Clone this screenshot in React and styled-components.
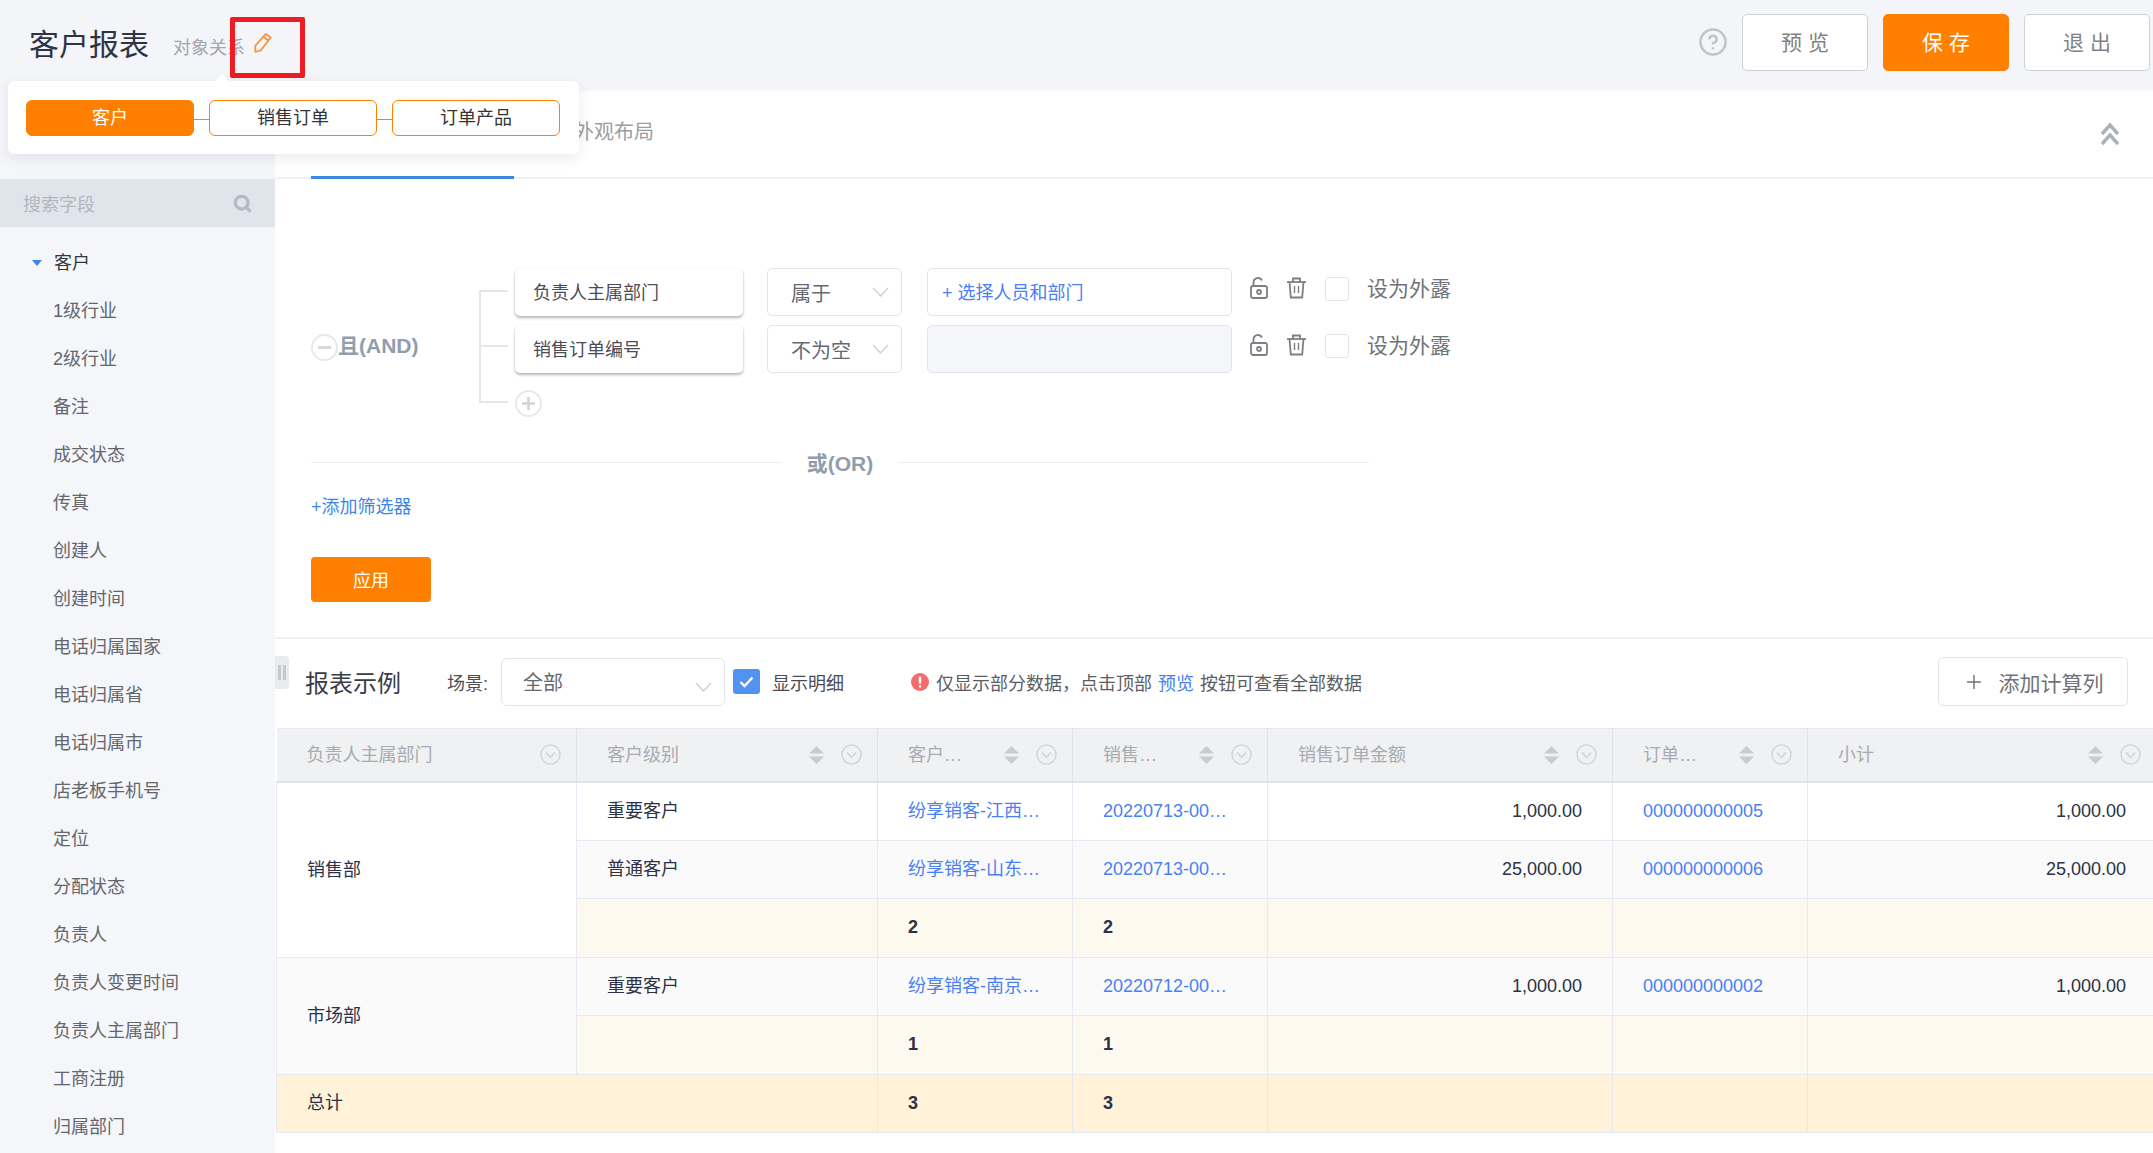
import React from 'react';
import styled, { createGlobalStyle } from 'styled-components';
import { CircleHelp, Search, Plus } from 'lucide-react';

const GlobalStyle = createGlobalStyle`
  html, body {
    margin: 0;
    padding: 0;
    height: 100%;
    background: #fff;
    font-family: "Liberation Sans", "Noto Sans CJK SC", sans-serif;
  }
  * { box-sizing: border-box; }
`;

const ORANGE = '#ff8000';
const LINK = '#4a80f5';

const Page = styled.div`
  position: relative;
  width: 2153px;
  height: 1153px;
  overflow: hidden;
  display: flex;
  flex-direction: column;
`;

const TopBar = styled.header`
  height: 90px;
  flex: none;
  display: flex;
  align-items: center;
  padding: 0 3px 6px 29px;
  background: #f4f5f9;
`;

const Title = styled.h1`
  margin: 0;
  font-size: 30px;
  font-weight: 400;
  color: #2f3445;
`;

const Relation = styled.span`
  margin: 8px 0 0 24px;
  font-size: 18px;
  color: #a3a6ad;
`;

const PencilWrap = styled.span`
  display: flex;
  margin: 0 0 0 8px;
`;

const TopActions = styled.div`
  margin-left: auto;
  display: flex;
  align-items: center;
`;

const HelpWrap = styled.span`
  display: flex;
  margin-right: 14px;
  color: #c2c4c8;
`;

const TopButton = styled.button`
  width: 126px;
  height: 57px;
  margin-left: ${p => (p.$first ? 0 : '15px')};
  padding: 0 0 3px;
  border-radius: 5px;
  border: 1px solid ${p => (p.$primary ? ORANGE : '#cfd0d3')};
  background: ${p => (p.$primary ? ORANGE : '#fff')};
  color: ${p => (p.$primary ? '#fff' : '#808285')};
  font-family: inherit;
  font-size: 21px;
  letter-spacing: 6px;
  text-indent: 6px;
`;

const RedMark = styled.div`
  position: absolute;
  left: 230px;
  top: 17px;
  width: 75px;
  height: 61px;
  border: 5px solid #ee1c25;
  border-radius: 2px;
`;

const Popover = styled.div`
  position: absolute;
  left: 8px;
  top: 81px;
  width: 571px;
  height: 73px;
  padding-left: 18px;
  display: flex;
  align-items: center;
  background: #fff;
  border-radius: 6px;
  box-shadow: 0 4px 14px rgba(40, 50, 70, 0.1);
  &::before {
    content: '';
    position: absolute;
    left: 207px;
    top: -7px;
    border-left: 7px solid transparent;
    border-right: 7px solid transparent;
    border-bottom: 7px solid #fff;
  }
`;

const ObjectNode = styled.div`
  width: 168px;
  height: 36px;
  margin-top: 1px;
  padding-bottom: 4px;
  display: flex;
  align-items: center;
  justify-content: center;
  border: 1px solid ${ORANGE};
  border-radius: 6px;
  background: ${p => (p.$active ? ORANGE : '#fff')};
  color: ${p => (p.$active ? '#fff' : '#333')};
  font-size: 18px;
`;

const NodeLink = styled.div`
  width: 15px;
  height: 1px;
  margin-top: 3px;
  background: ${ORANGE};
`;

const Body = styled.div`
  flex: 1;
  min-height: 0;
  display: flex;
`;

const Sidebar = styled.aside`
  width: 275px;
  flex: none;
  padding-top: 89px;
  overflow: hidden;
  background: #f5f6fa;
`;

const SearchBox = styled.div`
  height: 48px;
  padding: 0 23px;
  display: flex;
  align-items: center;
  justify-content: space-between;
  background: #e0e5ec;
  color: #b1b7bf;
  font-size: 18px;
`;

const FieldTree = styled.ul`
  list-style: none;
  margin: 0;
  padding: 10px 0 0;
`;

const FieldItem = styled.li`
  height: 48px;
  display: flex;
  align-items: center;
  padding-left: ${p => (p.$root ? '32px' : '53px')};
  font-size: 18px;
  color: ${p => (p.$root ? '#33363d' : '#63666d')};
`;

const Caret = styled.i`
  width: 0;
  height: 0;
  margin: 4px 12px 0 0;
  border-left: 5px solid transparent;
  border-right: 5px solid transparent;
  border-top: 6px solid #3c86e6;
`;

const Main = styled.main`
  flex: 1;
  min-width: 0;
  display: flex;
  flex-direction: column;
  background: #fff;
  overflow: hidden;
`;

const Tabs = styled.nav`
  height: 89px;
  flex: none;
  padding-left: 36px;
  display: flex;
  border-bottom: 2px solid #eeeff1;
  box-shadow: inset 0 5px 5px -5px rgba(0, 0, 0, 0.05);
`;

const Tab = styled.div`
  width: 203px;
  height: 89px;
  padding-top: 26px;
  text-align: center;
  font-size: 20px;
  color: ${p => (p.$active ? '#3c86e6' : '#9a9da3')};
  border-bottom: 3px solid ${p => (p.$active ? '#3c86e6' : 'transparent')};
  margin-right: ${p => (p.$active ? '60px' : 0)};
  &:last-of-type {
    width: auto;
    text-align: left;
  }
`;

const CollapseWrap = styled.span`
  margin: 32px 33px 0 auto;
  display: flex;
`;

const FilterPanel = styled.section`
  flex: none;
  height: 460px;
  padding: 89px 0 0 36px;
  border-bottom: 2px solid #eeeff1;
`;

const FilterGroup = styled.div`
  display: flex;
  align-items: flex-start;
`;

const Logic = styled.div`
  width: 168px;
  margin-top: 66px;
  display: flex;
  align-items: flex-start;
  font-size: 21px;
  line-height: 27px;
  font-weight: 700;
  color: #909dad;
`;

const LogicText = styled.span`
  margin-top: -2px;
`;

const TreeLine = styled.svg`
  flex: none;
  margin-top: 22px;
`;

const Rows = styled.div`
  display: flex;
  flex-direction: column;
  gap: 9px;
`;

const Row = styled.div`
  display: flex;
  align-items: flex-start;
`;

const FieldChip = styled.div`
  width: 228px;
  height: 48px;
  padding: 0 0 3px 18px;
  display: flex;
  align-items: center;
  font-size: 18px;
  color: #4a4d55;
  background: #fff;
  border-radius: 5px;
  box-shadow: 0 2px 3px rgba(0, 0, 0, 0.28), 0 0 2px rgba(0, 0, 0, 0.05);
`;

const OpSelect = styled.div`
  width: 135px;
  height: 48px;
  margin-left: 24px;
  padding: 0 12px 0 23px;
  display: flex;
  align-items: center;
  justify-content: space-between;
  font-size: 20px;
  color: #666a70;
  border: 1px solid #e3e5ec;
  border-radius: 5px;
`;

const ValueBox = styled.div`
  width: 305px;
  height: 48px;
  margin-left: 25px;
  padding: 0 0 3px 14px;
  display: flex;
  align-items: center;
  font-size: 18px;
  color: ${LINK};
  border: 1px solid #e3e5ec;
  border-radius: 5px;
  background: ${p => (p.$disabled ? '#f5f6fa' : '#fff')};
`;

const RowActions = styled.div`
  height: 24px;
  margin: 9px 0 0 18px;
  display: flex;
  align-items: center;
  font-size: 21px;
  line-height: 22px;
  color: #6f7277;
`;

const IconSlot = styled.span`
  display: flex;
  margin: -3px ${p => p.$gap}px 0 0;
`;

const CheckBox = styled.span`
  width: 24px;
  height: 24px;
  margin-right: 18px;
  border: 1px solid #e3e5ec;
  border-radius: 3px;
  background: #fff;
`;

const AddRow = styled.div`
  margin-top: 8px;
  display: flex;
`;

const OrRow = styled.div`
  width: 1058px;
  height: 30px;
  margin-top: 30px;
  display: flex;
  align-items: center;
  gap: 26px;
  font-size: 21px;
  font-weight: 700;
  color: #909dad;
  &::before, &::after {
    content: '';
    flex: 1;
    height: 1px;
    background: #e9ebf0;
  }
`;

const AddFilter = styled.div`
  margin-top: 18px;
  height: 24px;
  line-height: 24px;
  font-size: 18px;
  color: #3c86e6;
`;

const ApplyButton = styled.button`
  display: block;
  width: 120px;
  height: 45px;
  margin-top: 38px;
  padding: 0 0 2px;
  border: none;
  border-radius: 4px;
  background: ${ORANGE};
  color: #fff;
  font-family: inherit;
  font-size: 18px;
`;

const Report = styled.section`
  position: relative;
  flex: 1;
  min-height: 0;
  padding-left: 1px;
`;

const Handle = styled.div`
  position: absolute;
  left: 0;
  top: 17px;
  width: 14px;
  height: 33px;
  display: flex;
  align-items: center;
  justify-content: center;
  gap: 2px;
  background: #e9eaed;
  border-radius: 0 4px 4px 0;
  &::before, &::after {
    content: '';
    width: 3px;
    height: 15px;
    background: #c5c8ce;
  }
`;

const Toolbar = styled.div`
  height: 89px;
  padding: 0 25px 4px 29px;
  display: flex;
  align-items: center;
`;

const ReportTitle = styled.h2`
  margin: 0 46px 0 0;
  font-size: 24px;
  font-weight: 400;
  color: #3a3d44;
`;

const SceneLabel = styled.span`
  font-size: 18px;
  color: #4a4d55;
  margin-right: 13px;
`;

const SceneSelect = styled.div`
  width: 224px;
  height: 48px;
  padding: 0 12px 0 21px;
  display: flex;
  align-items: center;
  justify-content: space-between;
  font-size: 20px;
  color: #666a70;
  border: 1px solid #e3e5ec;
  border-radius: 6px;
  svg { margin-top: 10px; }
`;

const DetailCheck = styled.span`
  width: 27px;
  height: 25px;
  margin: 0 12px 0 8px;
  display: flex;
  align-items: center;
  justify-content: center;
  border-radius: 3px;
  background: #5093f1;
`;

const DetailLabel = styled.span`
  font-size: 18px;
  color: #4a4d55;
`;

const Notice = styled.div`
  margin-left: 67px;
  display: flex;
  align-items: center;
  font-size: 18px;
  color: #5a5d64;
  svg { margin-right: 7px; }
`;

const NoticeLink = styled.span`
  margin: 0 6px;
  color: ${LINK};
`;

const AddColumn = styled.button`
  width: 190px;
  height: 49px;
  margin-left: auto;
  padding: 0;
  display: flex;
  align-items: center;
  justify-content: center;
  gap: 14px;
  border: 1px solid #e3e5ec;
  border-radius: 5px;
  background: #fff;
  color: #6f7277;
  font-family: inherit;
  font-size: 21px;
`;

const Table = styled.table`
  width: 1880px;
  table-layout: fixed;
  border-collapse: collapse;
  border-top: 1px solid #e6e9f2;
`;

const Col = styled.col`
  width: ${p => p.$w}px;
`;

const HeadCell = styled.th`
  height: 53px;
  padding: 0 15px 0 30px;
  background: #f0f1f3;
  border-right: 1px solid #dfe1e5;
  border-bottom: 2px solid #e2e3e6;
  font-size: 18px;
  font-weight: 400;
  color: #a9abb0;
  text-align: left;
`;

const HeadInner = styled.div`
  display: flex;
  align-items: center;
  gap: 17px;
`;

const HeadLabel = styled.span`
  flex: 1;
  padding-bottom: 3px;
  white-space: nowrap;
`;

const DataRow = styled.tr`
  height: 58.5px;
`;

const Cell = styled.td`
  padding: 0 30px ${p => (p.$latin ? 0 : '4px')};
  border: 1px solid #e6e9f2;
  font-size: 18px;
  white-space: nowrap;
  color: ${p => (p.$link ? LINK : '#2c3147')};
  font-weight: ${p => (p.$bold ? 700 : 400)};
  text-align: ${p => (p.$right ? 'right' : 'left')};
  background: ${p => {
    if (p.$tone === 'sub') return '#fef9ef';
    if (p.$tone === 'total') return '#fff2d9';
    if (p.$tone === 'alt') return '#fafafa';
    return '#fff';
  }};
`;

const fields = [
  '1级行业', '2级行业', '备注', '成交状态', '传真', '创建人', '创建时间', '电话归属国家',
  '电话归属省', '电话归属市', '店老板手机号', '定位', '分配状态', '负责人', '负责人变更时间',
  '负责人主属部门', '工商注册', '归属部门',
];

const columns = [
  { w: 300, label: '负责人主属部门', noSort: true },
  { w: 301, label: '客户级别' },
  { w: 195, label: '客户…' },
  { w: 195, label: '销售…' },
  { w: 345, label: '销售订单金额' },
  { w: 195, label: '订单…' },
  { w: 349, label: '小计' },
];

const rows = [
  { level: '重要客户', customer: '纷享销客-江西…', order: '20220713-00…', amount: '1,000.00', item: '000000000005', subtotal: '1,000.00' },
  { level: '普通客户', customer: '纷享销客-山东…', order: '20220713-00…', amount: '25,000.00', item: '000000000006', subtotal: '25,000.00', tone: 'alt' },
  { level: '重要客户', customer: '纷享销客-南京…', order: '20220712-00…', amount: '1,000.00', item: '000000000002', subtotal: '1,000.00', tone: 'alt' },
];

const PencilIcon = () => (
  <svg width="20" height="21" viewBox="0 0 18 19" fill="none" stroke="#f59a45" strokeWidth="1.7" strokeLinejoin="round">
    <path d="M11.5 1.8 L16 5 L7 16.6 L2 18 L2 12.6 Z" />
    <path d="M9.4 4.4 L14 7.8" />
  </svg>
);

const ChevronsUp = () => (
  <svg width="20" height="24" viewBox="0 0 20 24" fill="none" stroke="#a6b2bd" strokeWidth="3.4">
    <path d="M2 12 L10 3 L18 12" />
    <path d="M2 22 L10 13 L18 22" />
  </svg>
);

const SmallChevron = ({ w = 17, h = 10 }) => (
  <svg width={w} height={h} viewBox="0 0 17 10" fill="none" stroke="#ccd0d8" strokeWidth="1.4">
    <path d="M1 1 L8.5 9 L16 1" />
  </svg>
);

const RoundGlyph = ({ minus }) => (
  <svg width="27" height="27" viewBox="0 0 27 27" fill="none">
    <circle cx="13.5" cy="13.5" r="12.5" stroke="#e8e8ea" strokeWidth="2" />
    <path d="M7 13.5 H20" stroke="#d2d3d6" strokeWidth="2.6" />
    {!minus && <path d="M13.5 7 V20" stroke="#d2d3d6" strokeWidth="2.6" />}
  </svg>
);

const LockIcon = () => (
  <svg width="18" height="22" viewBox="0 0 18 22" fill="none" stroke="#7d7f84" strokeWidth="1.8">
    <rect x="1" y="9" width="16" height="12" rx="2" />
    <circle cx="9" cy="15" r="2" />
    <path d="M3.5 9 V5.5 A4.5 4.5 0 0 1 12 3.5" />
  </svg>
);

const TrashIcon = () => (
  <svg width="21" height="22" viewBox="0 0 21 22" fill="none" stroke="#7d7f84" strokeWidth="1.8">
    <path d="M1 5 H20" />
    <path d="M7 5 V1.5 H14 V5" />
    <path d="M3.5 5 L4.8 20.5 H16.2 L17.5 5" />
    <path d="M8.5 9 V16 M12.5 9 V16" strokeWidth="1.4" />
  </svg>
);

const SortIcon = () => (
  <svg width="15" height="18" viewBox="0 0 15 18" fill="#c8cbd2">
    <path d="M7.5 0 L15 7.6 H0 Z" />
    <path d="M0 10.4 H15 L7.5 18 Z" />
  </svg>
);

const MenuIcon = () => (
  <svg width="21" height="21" viewBox="0 0 21 21" fill="none" stroke="#cfd2d8" strokeWidth="1.4">
    <circle cx="10.5" cy="10.5" r="9.6" />
    <path d="M6 8.5 L10.5 13.5 L15 8.5" />
  </svg>
);

const WarnIcon = () => (
  <svg width="18" height="18" viewBox="0 0 18 18">
    <circle cx="9" cy="9" r="9" fill="#f56c6c" />
    <rect x="7.8" y="3.5" width="2.4" height="7.5" rx="1" fill="#fff" />
    <rect x="7.8" y="12.2" width="2.4" height="2.4" rx="1" fill="#fff" />
  </svg>
);

const FilterRow = ({ field, op, value, disabled }) => (
  <Row>
    <FieldChip>{field}</FieldChip>
    <OpSelect>{op}<SmallChevron /></OpSelect>
    <ValueBox $disabled={disabled}>{value}</ValueBox>
    <RowActions>
      <IconSlot $gap={18}><LockIcon /></IconSlot>
      <IconSlot $gap={18}><TrashIcon /></IconSlot>
      <CheckBox />
      设为外露
    </RowActions>
  </Row>
);

const DetailCells = ({ row }) => (
  <>
    <Cell $tone={row.tone}>{row.level}</Cell>
    <Cell $tone={row.tone} $link>{row.customer}</Cell>
    <Cell $tone={row.tone} $link $latin>{row.order}</Cell>
    <Cell $tone={row.tone} $right $latin>{row.amount}</Cell>
    <Cell $tone={row.tone} $link $latin>{row.item}</Cell>
    <Cell $tone={row.tone} $right $latin>{row.subtotal}</Cell>
  </>
);

const SummaryCells = ({ count, tone }) => (
  <>
    <Cell $tone={tone} $bold $latin>{count}</Cell>
    <Cell $tone={tone} $bold $latin>{count}</Cell>
    <Cell $tone={tone} />
    <Cell $tone={tone} />
    <Cell $tone={tone} />
  </>
);

export default function App() {
  return (
    <Page>
      <GlobalStyle />
      <TopBar>
        <Title>客户报表</Title>
        <Relation>对象关系</Relation>
        <PencilWrap><PencilIcon /></PencilWrap>
        <TopActions>
          <HelpWrap><CircleHelp size={30} strokeWidth={2} /></HelpWrap>
          <TopButton $first>预览</TopButton>
          <TopButton $primary>保存</TopButton>
          <TopButton>退出</TopButton>
        </TopActions>
      </TopBar>

      <Body>
        <Sidebar>
          <SearchBox>
            搜索字段
            <Search size={19} strokeWidth={4} color="#b4bac2" />
          </SearchBox>
          <FieldTree>
            <FieldItem $root><Caret />客户</FieldItem>
            {fields.map(name => <FieldItem key={name}>{name}</FieldItem>)}
          </FieldTree>
        </Sidebar>

        <Main>
          <Tabs>
            <Tab $active>筛选条件</Tab>
            <Tab>外观布局</Tab>
            <CollapseWrap><ChevronsUp /></CollapseWrap>
          </Tabs>

          <FilterPanel>
            <FilterGroup>
              <Logic><RoundGlyph minus /><LogicText>且(AND)</LogicText></Logic>
              <TreeLine width="36" height="114" viewBox="0 0 36 114" fill="none" stroke="#e6e6e8" strokeWidth="2">
                <path d="M29 1 H1 V112 H29 M1 56 H29" />
              </TreeLine>
              <Rows>
                <FilterRow field="负责人主属部门" op="属于" value="+ 选择人员和部门" />
                <FilterRow field="销售订单编号" op="不为空" disabled />
                <AddRow><RoundGlyph /></AddRow>
              </Rows>
            </FilterGroup>
            <OrRow>或(OR)</OrRow>
            <AddFilter>+添加筛选器</AddFilter>
            <ApplyButton>应用</ApplyButton>
          </FilterPanel>

          <Report>
            <Handle />
            <Toolbar>
              <ReportTitle>报表示例</ReportTitle>
              <SceneLabel>场景:</SceneLabel>
              <SceneSelect>全部<SmallChevron /></SceneSelect>
              <DetailCheck>
                <svg width="15" height="12" viewBox="0 0 15 12" fill="none" stroke="#fff" strokeWidth="2.4">
                  <path d="M1.5 6 L5.5 10 L13.5 1.5" />
                </svg>
              </DetailCheck>
              <DetailLabel>显示明细</DetailLabel>
              <Notice>
                <WarnIcon />
                仅显示部分数据，点击顶部<NoticeLink>预览</NoticeLink>按钮可查看全部数据
              </Notice>
              <AddColumn><Plus size={22} strokeWidth={1.6} />添加计算列</AddColumn>
            </Toolbar>

            <Table>
              <colgroup>
                {columns.map(c => <Col key={c.label} $w={c.w} />)}
              </colgroup>
              <thead>
                <tr>
                  {columns.map(c => (
                    <HeadCell key={c.label}>
                      <HeadInner>
                        <HeadLabel>{c.label}</HeadLabel>
                        {!c.noSort && <SortIcon />}
                        <MenuIcon />
                      </HeadInner>
                    </HeadCell>
                  ))}
                </tr>
              </thead>
              <tbody>
                <DataRow>
                  <Cell rowSpan={3}>销售部</Cell>
                  <DetailCells row={rows[0]} />
                </DataRow>
                <DataRow><DetailCells row={rows[1]} /></DataRow>
                <DataRow>
                  <Cell $tone="sub" />
                  <SummaryCells count="2" tone="sub" />
                </DataRow>
                <DataRow>
                  <Cell rowSpan={2} $tone="alt">市场部</Cell>
                  <DetailCells row={rows[2]} />
                </DataRow>
                <DataRow>
                  <Cell $tone="sub" />
                  <SummaryCells count="1" tone="sub" />
                </DataRow>
                <DataRow>
                  <Cell $tone="total" colSpan={2}>总计</Cell>
                  <SummaryCells count="3" tone="total" />
                </DataRow>
              </tbody>
            </Table>
          </Report>
        </Main>
      </Body>

      <RedMark />
      <Popover>
        <ObjectNode $active>客户</ObjectNode>
        <NodeLink />
        <ObjectNode>销售订单</ObjectNode>
        <NodeLink />
        <ObjectNode>订单产品</ObjectNode>
      </Popover>
    </Page>
  );
}
